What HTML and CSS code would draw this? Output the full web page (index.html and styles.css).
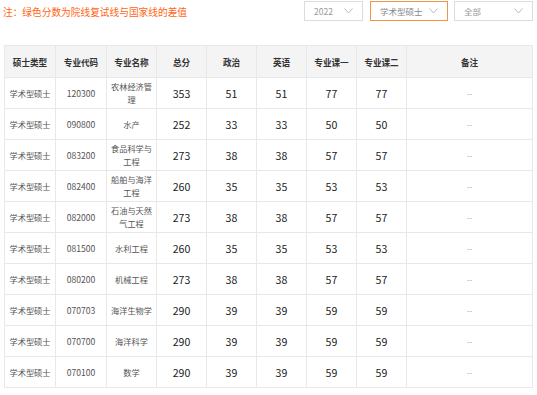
FILE: index.html
```html
<!DOCTYPE html>
<html lang="zh">
<head>
<meta charset="utf-8">
<title>分数线</title>
<link rel="stylesheet" href="styles.css">
</head>
<body>
<div class="topbar">
  <div class="note">注：绿色分数为院线复试线与国家线的差值</div>
  <div class="filters">
    <div class="select sel-year"><span>2022</span><svg class="chev" width="9" height="6" viewBox="0 0 9 6"><polyline points="0.5,0.5 4.5,5 8.5,0.5" fill="none" stroke="#bbb" stroke-width="1"/></svg></div>
    <div class="select sel-type active"><span>学术型硕士</span><svg class="chev" width="9" height="6" viewBox="0 0 9 6"><polyline points="0.5,0.5 4.5,5 8.5,0.5" fill="none" stroke="#bbb" stroke-width="1"/></svg></div>
    <div class="select sel-all"><span>全部</span><svg class="chev" width="9" height="6" viewBox="0 0 9 6"><polyline points="0.5,0.5 4.5,5 8.5,0.5" fill="none" stroke="#bbb" stroke-width="1"/></svg></div>
  </div>
</div>
<table class="scores">
  <colgroup>
    <col class="c51"><col class="c51"><col class="c50"><col class="c50"><col class="c50"><col class="c50"><col class="c50"><col class="c50"><col class="c126">
  </colgroup>
  <thead>
    <tr><th>硕士类型</th><th>专业代码</th><th>专业名称</th><th>总分</th><th>政治</th><th>英语</th><th>专业课一</th><th>专业课二</th><th>备注</th></tr>
  </thead>
  <tbody>
    <tr><td class="t">学术型硕士</td><td class="code">120300</td><td class="t">农林经济管理</td><td class="n">353</td><td class="n">51</td><td class="n">51</td><td class="n">77</td><td class="n">77</td><td class="rm">--</td></tr>
    <tr><td class="t">学术型硕士</td><td class="code">090800</td><td class="t">水产</td><td class="n">252</td><td class="n">33</td><td class="n">33</td><td class="n">50</td><td class="n">50</td><td class="rm">--</td></tr>
    <tr><td class="t">学术型硕士</td><td class="code">083200</td><td class="t">食品科学与工程</td><td class="n">273</td><td class="n">38</td><td class="n">38</td><td class="n">57</td><td class="n">57</td><td class="rm">--</td></tr>
    <tr><td class="t">学术型硕士</td><td class="code">082400</td><td class="t">船舶与海洋工程</td><td class="n">260</td><td class="n">35</td><td class="n">35</td><td class="n">53</td><td class="n">53</td><td class="rm">--</td></tr>
    <tr><td class="t">学术型硕士</td><td class="code">082000</td><td class="t">石油与天然气工程</td><td class="n">273</td><td class="n">38</td><td class="n">38</td><td class="n">57</td><td class="n">57</td><td class="rm">--</td></tr>
    <tr><td class="t">学术型硕士</td><td class="code">081500</td><td class="t">水利工程</td><td class="n">260</td><td class="n">35</td><td class="n">35</td><td class="n">53</td><td class="n">53</td><td class="rm">--</td></tr>
    <tr><td class="t">学术型硕士</td><td class="code">080200</td><td class="t">机械工程</td><td class="n">273</td><td class="n">38</td><td class="n">38</td><td class="n">57</td><td class="n">57</td><td class="rm">--</td></tr>
    <tr><td class="t">学术型硕士</td><td class="code">070703</td><td class="t">海洋生物学</td><td class="n">290</td><td class="n">39</td><td class="n">39</td><td class="n">59</td><td class="n">59</td><td class="rm">--</td></tr>
    <tr><td class="t">学术型硕士</td><td class="code">070700</td><td class="t">海洋科学</td><td class="n">290</td><td class="n">39</td><td class="n">39</td><td class="n">59</td><td class="n">59</td><td class="rm">--</td></tr>
    <tr><td class="t">学术型硕士</td><td class="code">070100</td><td class="t">数学</td><td class="n">290</td><td class="n">39</td><td class="n">39</td><td class="n">59</td><td class="n">59</td><td class="rm">--</td></tr>
  </tbody>
</table>
</body>
</html>
```

FILE: styles.css
```css
html, body {
  margin: 0;
  padding: 0;
  background: #ffffff;
  font-family: "Noto Sans CJK SC", "Noto Sans", sans-serif;
  color: #333;
}

.topbar {
  display: flex;
  justify-content: space-between;
  align-items: flex-start;
  padding: 1px 4px 0 3px;
  height: 45px;
  box-sizing: border-box;
}

.note {
  color: #ff6414;
  font-size: 9.7px;
  line-height: 20px;
  margin-top: 1px;
  white-space: nowrap;
}

.filters {
  display: flex;
  gap: 6px;
}

.select {
  box-sizing: border-box;
  height: 20px;
  border: 1px solid #dcdcdc;
  background: #fff;
  display: flex;
  align-items: center;
  justify-content: space-between;
  padding: 0 9px 0 9px;
  font-size: 8.5px;
  color: #999;
}

.select span {
  white-space: nowrap;
}

.sel-year { width: 59px; margin-right: 1px; }
.sel-type { width: 78px; }
.sel-all { width: 79px; }

.select.active {
  border-color: #f0954a;
  color: #888;
}

.chev {
  display: block;
  flex: none;
}

.scores {
  margin-left: 4px;
  border-collapse: collapse;
  table-layout: fixed;
  width: 528px;
}

.c51 { width: 51px; }
.c50 { width: 50px; }
.c126 { width: 126px; }

.scores th,
.scores td {
  border: 1px solid #e8e8e8;
  text-align: center;
  vertical-align: middle;
  padding: 0 4px;
}

.scores thead tr {
  height: 32px;
}

.scores th {
  background: #f4f4f4;
  font-size: 8.6px;
  font-weight: bold;
  color: #333;
}

.scores tbody tr {
  height: 31px;
}

.scores td {
  font-size: 8.2px;
  line-height: 13px;
  color: #555;
}

.scores td.code {
  font-size: 8.6px;
  color: #555;
}

.scores td.n {
  font-size: 10.6px;
  color: #222;
}

.scores td.rm {
  color: #aaa;
  font-size: 8px;
}
```
